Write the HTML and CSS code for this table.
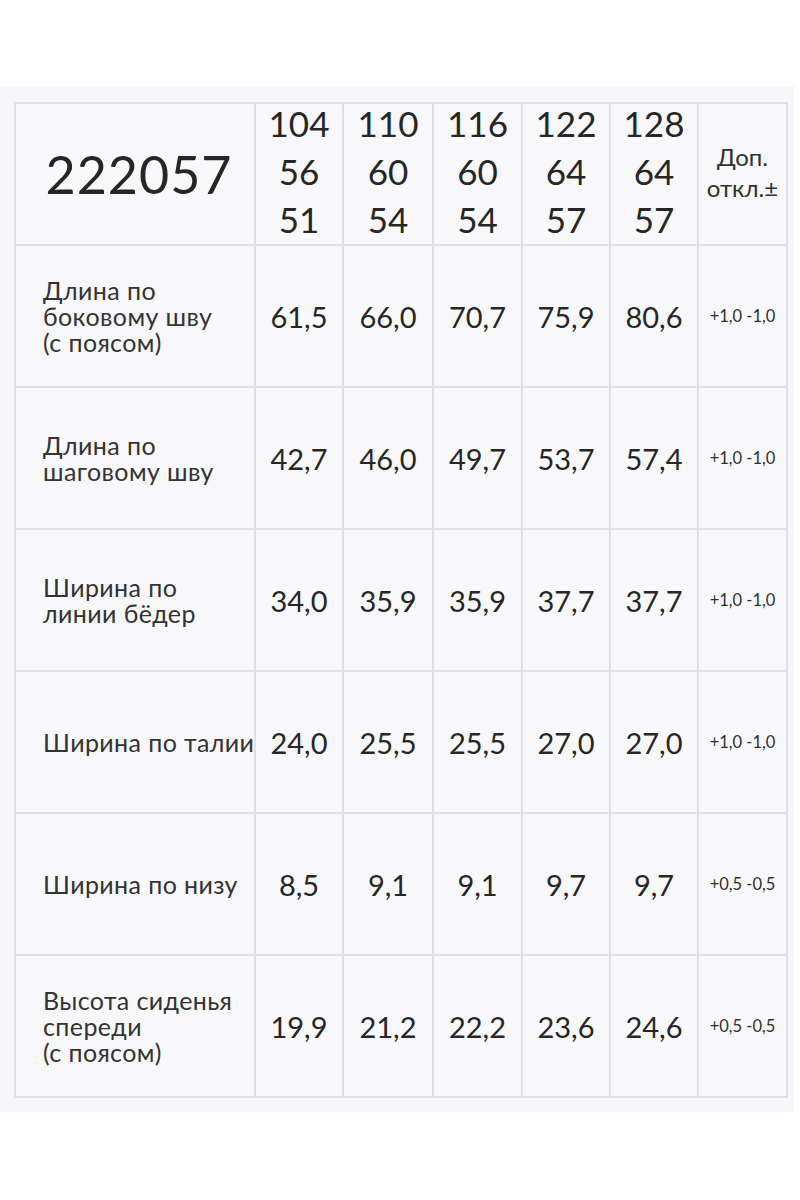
FILE: index.html
```html
<!DOCTYPE html>
<html lang="ru">
<head>
<meta charset="utf-8">
<link rel="stylesheet" href="styles.css">
</head>
<body>
<div class="page">
  <div class="panel">
    <table class="sizes">
      <colgroup>
        <col class="c-label"><col class="c-88"><col class="c-90"><col class="c-89"><col class="c-88"><col class="c-88"><col class="c-89">
      </colgroup>
      <tr class="head">
        <td class="article">222057</td>
        <td class="size"><div class="stack">104<br>56<br>51</div></td>
        <td class="size"><div class="stack">110<br>60<br>54</div></td>
        <td class="size"><div class="stack">116<br>60<br>54</div></td>
        <td class="size"><div class="stack">122<br>64<br>57</div></td>
        <td class="size"><div class="stack">128<br>64<br>57</div></td>
        <td class="tolhead"><div class="tolstack">Доп.<br>откл.±</div></td>
      </tr>
      <tr>
        <td class="label">Длина по<br>боковому шву<br>(с поясом)</td>
        <td class="val">61,5</td><td class="val">66,0</td><td class="val">70,7</td><td class="val">75,9</td><td class="val">80,6</td>
        <td class="tol">+1,0 -1,0</td>
      </tr>
      <tr>
        <td class="label">Длина по<br>шаговому шву</td>
        <td class="val">42,7</td><td class="val">46,0</td><td class="val">49,7</td><td class="val">53,7</td><td class="val">57,4</td>
        <td class="tol">+1,0 -1,0</td>
      </tr>
      <tr>
        <td class="label">Ширина по<br>линии бёдер</td>
        <td class="val">34,0</td><td class="val">35,9</td><td class="val">35,9</td><td class="val">37,7</td><td class="val">37,7</td>
        <td class="tol">+1,0 -1,0</td>
      </tr>
      <tr>
        <td class="label">Ширина по талии</td>
        <td class="val">24,0</td><td class="val">25,5</td><td class="val">25,5</td><td class="val">27,0</td><td class="val">27,0</td>
        <td class="tol">+1,0 -1,0</td>
      </tr>
      <tr>
        <td class="label">Ширина по низу</td>
        <td class="val">8,5</td><td class="val">9,1</td><td class="val">9,1</td><td class="val">9,7</td><td class="val">9,7</td>
        <td class="tol">+0,5 -0,5</td>
      </tr>
      <tr>
        <td class="label">Высота сиденья<br>спереди<br>(с поясом)</td>
        <td class="val">19,9</td><td class="val">21,2</td><td class="val">22,2</td><td class="val">23,6</td><td class="val">24,6</td>
        <td class="tol">+0,5 -0,5</td>
      </tr>
    </table>
  </div>
</div>
</body>
</html>
```

FILE: styles.css
```css
html, body {
  margin: 0;
  padding: 0;
  background: #ffffff;
}
.page {
  width: 800px;
  height: 1200px;
  padding-top: 86px;
  box-sizing: border-box;
}
.panel {
  width: 794px;
  background: #f7f7f9;
  padding: 16px 0 14px 14px;
  box-sizing: border-box;
}
.sizes {
  border-collapse: collapse;
  table-layout: fixed;
  width: 772px;
  font-family: "Lato", "Liberation Sans", sans-serif;
  color: #262626;
  background: #f8f8fa;
}
.c-label { width: 240px; }
.c-88 { width: 88px; }
.c-89 { width: 89px; }
.c-90 { width: 90px; }
.sizes td {
  border: 2px solid #dfe0e9;
  height: 140px;
  padding: 0;
  text-align: center;
  vertical-align: middle;
}
.sizes td.article {
  font-size: 52px;
  letter-spacing: 1px;
  padding-left: 8px;
}
.size {
  font-size: 35px;
}
.stack {
  line-height: 48px;
  margin: -7px 0 -1px 0;
}
.sizes td.tolhead {
  font-size: 24px;
  color: #303030;
}
.tolstack {
  line-height: 31px;
  margin-top: -4px;
}
.sizes td.label {
  text-align: left;
  padding-left: 27px;
  font-size: 25px;
  line-height: 26px;
  letter-spacing: 0.4px;
  white-space: nowrap;
  color: #333333;
}
.val {
  font-size: 29px;
}
.tol {
  font-size: 16.5px;
  color: #303030;
}
```
